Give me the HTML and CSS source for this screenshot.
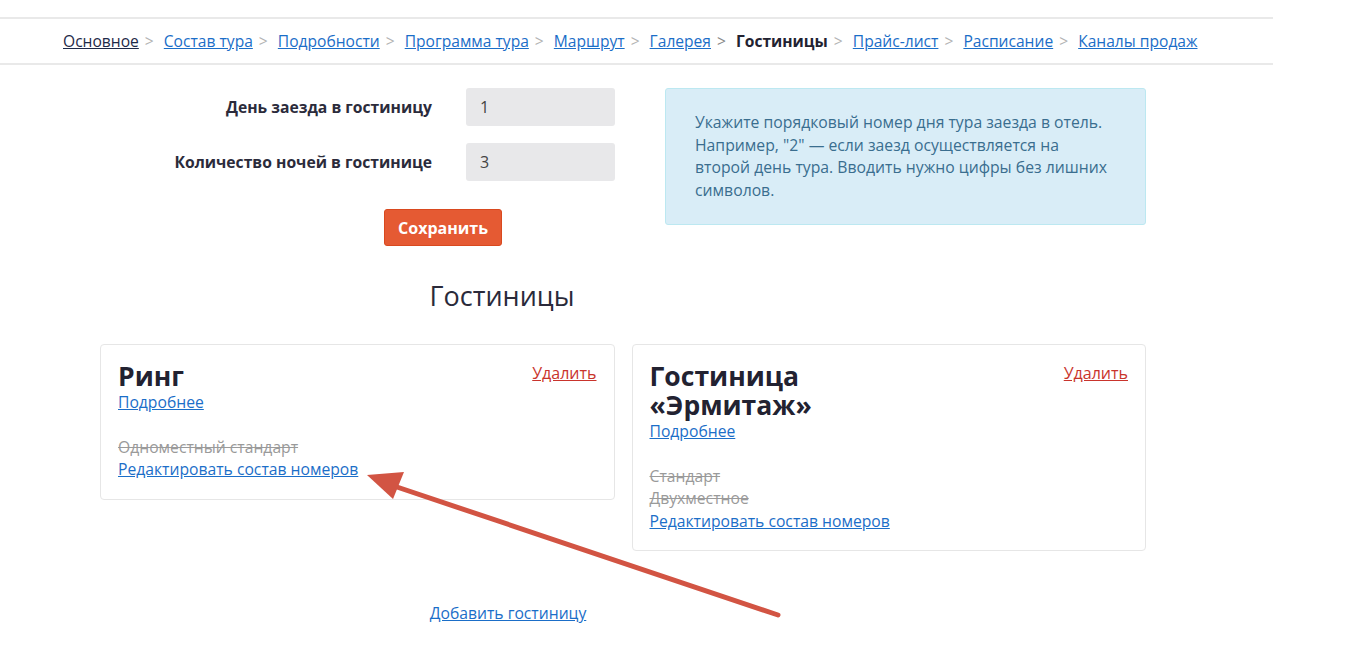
FILE: index.html
```html
<!DOCTYPE html>
<html lang="ru">
<head>
    <meta charset="UTF-8">
    <meta name="viewport" content="width=device-width, initial-scale=1.0">
    <title>Гостиницы</title>
    <link rel="stylesheet" href="styles.css">
</head>
<body>
    <div class="crumbs">
        <a href="javascript:;" class="visited">Основное</a><span class="sep">&gt;</span>
        <a href="javascript:;">Состав тура</a><span class="sep">&gt;</span>
        <a href="javascript:;">Подробности</a><span class="sep">&gt;</span>
        <a href="javascript:;">Программа тура</a><span class="sep">&gt;</span>
        <a href="javascript:;">Маршрут</a><span class="sep">&gt;</span>
        <a href="javascript:;">Галерея</a><span class="sep dark">&gt;</span>
        <b>Гостиницы</b><span class="sep">&gt;</span>
        <a href="javascript:;">Прайс-лист</a><span class="sep">&gt;</span>
        <a href="javascript:;">Расписание</a><span class="sep">&gt;</span>
        <a href="javascript:;">Каналы продаж</a>
    </div>

    <div class="content">
        <div class="top">
            <form class="form">
                <div class="row">
                    <label>День заезда в гостиницу</label>
                    <input type="text" value="1">
                </div>
                <div class="row">
                    <label>Количество ночей в гостинице</label>
                    <input type="text" value="3">
                </div>
                <div class="actions">
                    <button type="button">Сохранить</button>
                </div>
            </form>
            <div class="info">
                Укажите порядковый номер дня тура заезда в отель. Например, "2" — если заезд осуществляется на второй день тура. Вводить нужно цифры без лишних символов.
            </div>
        </div>

        <h2 class="title">Гостиницы</h2>

        <div class="hotels">
            <div class="card">
                <div class="card-head">
                    <div>
                        <h3>Ринг</h3>
                        <a href="javascript:;">Подробнее</a>
                    </div>
                    <a href="javascript:;" class="del">Удалить</a>
                </div>
                <ul class="rooms">
                    <li><s>Одноместный стандарт</s></li>
                    <li><a href="javascript:;">Редактировать состав номеров</a></li>
                </ul>
            </div>
            <div class="card">
                <div class="card-head">
                    <div>
                        <h3>Гостиница «Эрмитаж»</h3>
                        <a href="javascript:;">Подробнее</a>
                    </div>
                    <a href="javascript:;" class="del">Удалить</a>
                </div>
                <ul class="rooms">
                    <li><s>Стандарт</s></li>
                    <li><s>Двухместное</s></li>
                    <li><a href="javascript:;">Редактировать состав номеров</a></li>
                </ul>
            </div>
        </div>

        <div class="add">
            <a href="javascript:;">Добавить гостиницу</a>
        </div>
    </div>

    <svg class="arrow" width="1348" height="645" viewBox="0 0 1348 645">
        <line x1="778" y1="615" x2="388" y2="484" stroke="#d25443" stroke-width="5" stroke-linecap="round"/>
        <polygon points="367,475 404,472 393,499" fill="#d25443"/>
    </svg>
</body>
</html>
```

FILE: styles.css
```css
*{
    margin: 0;
    padding: 0;
    box-sizing: border-box;
}
body{
    font-family: "Open Sans", "Noto Sans", sans-serif;
    font-size: 15.7px;
    color: #2b2b3b;
    background: #fff;
    position: relative;
}
a{
    color: #1b6ec8;
}
.crumbs{
    width: 1273px;
    margin-top: 17px;
    height: 48px;
    border-top: 2px solid #e9e9e9;
    border-bottom: 2px solid #e9e9e9;
    padding: 10px 0 0 63px;
    font-size: 15.6px;
    line-height: 24px;
    white-space: nowrap;
}
.crumbs a.visited{
    color: #1e2a48;
}
.crumbs b{
    color: #222231;
}
.sep{
    color: #b3b3b3;
    margin: 0 6px;
}
.sep.dark{
    color: #888;
}
.content{
    width: 1046px;
    margin-left: 100px;
}
.top{
    display: flex;
    gap: 50px;
    margin-top: 23px;
}
.form{
    width: 515px;
}
.row{
    display: flex;
    align-items: center;
    gap: 34px;
    margin-bottom: 17px;
}
.row label{
    width: 332px;
    text-align: right;
    font-weight: bold;
    font-size: 15.7px;
}
.row input{
    width: 149px;
    height: 38px;
    border: none;
    border-radius: 3px;
    background: #e8e8ea;
    padding: 0 14px;
    font-family: inherit;
    font-size: 16px;
    color: #444;
}
.actions{
    padding: 11px 0 0 284px;
}
.actions button{
    width: 118px;
    height: 37px;
    border: 1px solid #d9491f;
    border-radius: 3px;
    background: #e55a33;
    color: #fff;
    font-family: inherit;
    font-weight: bold;
    font-size: 16px;
}
.info{
    width: 481px;
    height: 137px;
    background: #d9edf7;
    border: 1px solid #bce8f1;
    border-radius: 3px;
    padding: 22px 29px;
    color: #3a6e8f;
    font-size: 15.75px;
    line-height: 22.5px;
}
.title{
    width: 804px;
    text-align: center;
    font-weight: normal;
    font-size: 27px;
    line-height: 36px;
    color: #2a2a3a;
    margin-top: 32px;
}
.hotels{
    display: flex;
    align-items: flex-start;
    gap: 17px;
    margin-top: 30px;
}
.card{
    width: 515px;
    border: 1px solid #e6e6e6;
    border-radius: 4px;
    padding: 17px 17px 18px 17px;
    line-height: 22.5px;
}
.card-head{
    display: flex;
    justify-content: space-between;
    align-items: flex-start;
}
.card-head > div{
    width: 240px;
}
.card h3{
    font-size: 26.5px;
    line-height: 29px;
    color: #222231;
}
.del{
    color: #c9342c;
    font-size: 16px;
}
.rooms{
    list-style: none;
    margin-top: 22px;
}
.rooms s{
    color: #9a9a9a;
}
.add{
    width: 816px;
    text-align: center;
    margin-top: 51px;
}
.arrow{
    position: absolute;
    left: 0;
    top: 0;
    pointer-events: none;
}
```
